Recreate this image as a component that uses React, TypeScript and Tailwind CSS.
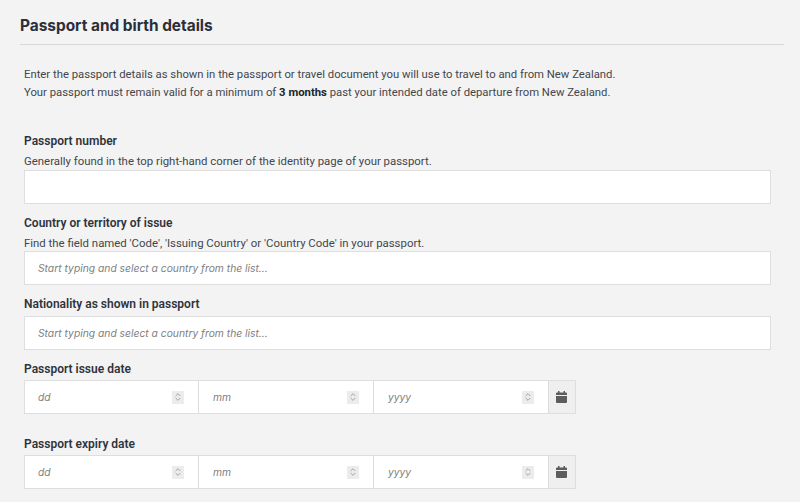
import React from 'react';
import { ChevronsUpDown } from 'lucide-react';

const DateInput = ({ placeholder, first }: { placeholder: string; first?: boolean }) => (
  <div className={`h-full flex items-center justify-between pr-[14px] bg-white ${first ? 'w-[173px] pl-[13px]' : 'w-[175px] pl-[14px] border-l border-[#dcdcdc]'}`}>
    <span className="italic text-[10.3px] pt-px text-[#808080] font-['Inter',sans-serif]">{placeholder}</span>
    <span className="w-3 h-[13px] bg-[#ececec] flex items-center justify-center text-[#777]">
      <ChevronsUpDown size={10} strokeWidth={1.5} />
    </span>
  </div>
);

const DateRow = () => (
  <div className="flex h-[34px] w-[552px] border border-[#dedede] bg-white">
    <DateInput placeholder="dd" first />
    <DateInput placeholder="mm" />
    <DateInput placeholder="yyyy" />
    <div className="flex-1 bg-[#efefef] border-l border-[#dcdcdc] flex items-center justify-center pr-[2px]">
      <svg width="11" height="12" viewBox="0 0 11 12" fill="#5c5c5c">
        <rect x="2" y="0" width="1.5" height="2" />
        <rect x="7.5" y="0" width="1.5" height="2" />
        <path d="M0 2.5a1 1 0 0 1 1-1h9a1 1 0 0 1 1 1V4H0z" />
        <path d="M0 5h11v6a1 1 0 0 1-1 1H1a1 1 0 0 1-1-1z" />
      </svg>
    </div>
  </div>
);

const TextBox = ({ placeholder }: { placeholder?: string }) => (
  <div className="h-[34px] border border-[#dedede] bg-white flex items-center pl-[13px]">
    <span className="italic text-[10.3px] pt-px text-[#808080] font-['Inter',sans-serif]">{placeholder}</span>
  </div>
);

const Label = ({ children }: { children: React.ReactNode }) => (
  <div className="h-[18px] pt-px text-[12px] leading-[18px] font-semibold text-[#2f333b]">{children}</div>
);

const Hint = ({ children }: { children: React.ReactNode }) => (
  <div className="h-[18px] pt-px text-[11.4px] leading-[18px] text-[#43464d]">{children}</div>
);

export default function App() {
  return (
    <div className="w-[800px] h-[502px] overflow-hidden bg-[#f3f3f3] font-['Roboto',sans-serif]">
      <div className="pl-5 pr-[16px] pt-[16px]">
        <h2 className="h-[29px] border-b border-[#d8d8d8] text-[15.4px] leading-[20px] font-bold text-[#2b2f3a] font-['Inter',sans-serif]">
          Passport and birth details
        </h2>
      </div>
      <div className="pl-6 pr-[29px]">
        <div className="mt-[21px] text-[11.3px] leading-[17.5px] text-[#43464d]">
          <p>Enter the passport details as shown in the passport or travel document you will use to travel to and from New Zealand.</p>
          <p>
            Your passport must remain valid for a minimum of <strong className="font-bold text-[#22252c]">3 months</strong> past your intended date of departure from New Zealand.
          </p>
        </div>

        <div className="mt-[30px]">
          <Label>Passport number</Label>
          <div className="mt-[2px]"><Hint>Generally found in the top right-hand corner of the identity page of your passport.</Hint></div>
          <div className="mt-[1px]"><TextBox /></div>
        </div>

        <div className="mt-[9px]">
          <Label>Country or territory of issue</Label>
          <div className="mt-[2px]"><Hint>Find the field named 'Code', 'Issuing Country' or 'Country Code' in your passport.</Hint></div>
          <TextBox placeholder="Start typing and select a country from the list..." />
        </div>

        <div className="mt-[9px]">
          <Label>Nationality as shown in passport</Label>
          <div className="mt-[4px]"><TextBox placeholder="Start typing and select a country from the list..." /></div>
        </div>

        <div className="mt-[9px]">
          <Label>Passport issue date</Label>
          <div className="mt-[3px]"><DateRow /></div>
        </div>

        <div className="mt-[20px]">
          <Label>Passport expiry date</Label>
          <div className="mt-[3px]"><DateRow /></div>
        </div>
      </div>
    </div>
  );
}
